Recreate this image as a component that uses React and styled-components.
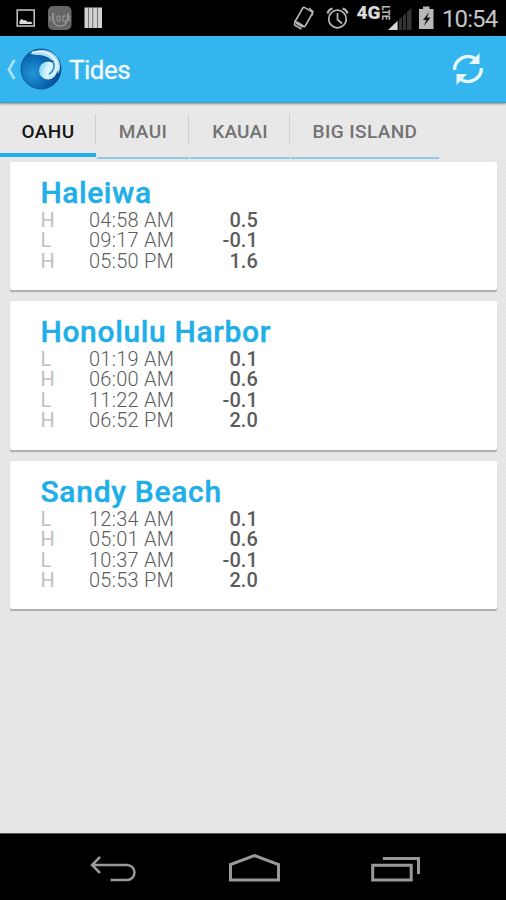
import React from 'react';
import styled, { createGlobalStyle } from 'styled-components';

const GlobalStyle = createGlobalStyle`
  body {
    margin: 0;
    background: #000;
    font-family: Roboto, 'Liberation Sans', sans-serif;
  }

  svg {
    display: block;
    flex: none;
  }
`;

const Screen = styled.div`
  width: 506px;
  height: 900px;
  display: flex;
  flex-direction: column;
  overflow: hidden;
  background-color: #e7e7e7;
  background-image: linear-gradient(45deg, #e3e3e3 25%, #e9e9e9 25% 50%, #e3e3e3 50% 75%, #e9e9e9 75%);
  background-size: 4px 4px;
`;

const StatusBar = styled.header`
  flex: none;
  height: 36px;
  display: flex;
  justify-content: space-between;
  background: #000;
`;

const StatusGroup = styled.div`
  display: flex;
`;

const Clock = styled.span`
  width: 64px;
  color: #c4c4c4;
  font-size: 24px;
  line-height: 38px;
  letter-spacing: -0.9px;
  white-space: nowrap;
`;

const ActionBar = styled.div`
  flex: none;
  height: 67px;
  display: flex;
  align-items: center;
  background: #35b5ee;
  border-bottom: 1px solid #4a9cc6;
  box-sizing: border-box;
  box-shadow: 0 1px 2px rgba(0, 0, 0, 0.4);
  z-index: 1;
`;

const ScreenTitle = styled.h1`
  flex: 1;
  margin: 2px 0 0 7px;
  color: #f3fbff;
  font-size: 26px;
  font-weight: 400;
  letter-spacing: -0.5px;
  -webkit-text-stroke: 0.3px #f3fbff;
`;

const RefreshButton = styled.button`
  margin: 0 20px 0 0;
  padding: 0;
  border: none;
  background: none;
`;

const Tabs = styled.nav`
  flex: none;
  height: 56px;
  display: flex;
`;

const Tab = styled.div`
  box-sizing: border-box;
  width: ${(props) => props.$width}px;
  height: ${(props) => (props.$active ? 54 : 56)}px;
  margin-right: 1px;
  text-align: center;
  color: ${(props) => (props.$active ? '#151515' : '#737373')};
  font-size: 19px;
  font-weight: 500;
  line-height: 58px;
  letter-spacing: ${(props) => props.$spacing}px;
  white-space: nowrap;
  background-color: #e8e8e8;
  border-bottom: ${(props) => (props.$active ? '4px solid #22aee8' : '2px solid #8fc9e8')};
  background-image: linear-gradient(#cfcfcf, #cfcfcf);
  background-size: ${(props) => (props.$last ? '0 0' : '1px 31px')};
  background-position: right 11px;
  background-repeat: no-repeat;
`;

const TabFill = styled.div`
  flex: 1;
  height: 54px;
  margin-left: -1px;
  background: #e8e8e8;
`;

const Stations = styled.main`
  flex: 1;
  display: flex;
  flex-direction: column;
  gap: 11px;
  padding: 3px 9px 0 10px;
`;

const Card = styled.section`
  box-sizing: border-box;
  height: ${(props) => props.$height}px;
  padding: 13px 30.5px 0;
  background: #fff;
  border-radius: 2px;
  box-shadow: 0 2px 1px rgba(0, 0, 0, 0.25);
`;

const StationName = styled.h2`
  margin: 0;
  height: 35px;
  color: #1eaee8;
  font-size: 30px;
  font-weight: 500;
  line-height: 36px;
  letter-spacing: ${(props) => props.$spacing}px;
  -webkit-text-stroke: 0.4px #1eaee8;
`;

const TideRow = styled.div`
  display: grid;
  grid-template-columns: 48.5px 86px 83px;
  height: 20.4px;
  font-size: 20px;
  line-height: 21.4px;
  white-space: nowrap;
`;

const TideType = styled.span`
  color: #c0c0c0;
  font-weight: 400;
`;

const TideTime = styled.span`
  color: #5c5c5c;
  font-weight: 300;
  letter-spacing: 0.25px;
`;

const TideHeight = styled.span`
  color: #5c5c5c;
  font-weight: 500;
  text-align: right;
  letter-spacing: 0.1px;
`;

const NavBar = styled.footer`
  flex: none;
  box-sizing: border-box;
  height: 67px;
  border-top: 1px solid #555;
  padding: 20px 85px 0 88px;
  display: flex;
  justify-content: space-between;
  background: #000;
`;

const tabs = [
  { label: 'OAHU', width: 96, spacing: 0.4, active: true },
  { label: 'MAUI', width: 92, spacing: 0.4 },
  { label: 'KAUAI', width: 100, spacing: 0.2 },
  { label: 'BIG ISLAND', width: 148, spacing: 0.4 },
];

const stations = [
  {
    name: 'Haleiwa',
    spacing: 0.55,
    height: 128,
    tides: [
      ['H', '04:58 AM', '0.5'],
      ['L', '09:17 AM', '-0.1'],
      ['H', '05:50 PM', '1.6'],
    ],
  },
  {
    name: 'Honolulu Harbor',
    spacing: 0.65,
    height: 149,
    tides: [
      ['L', '01:19 AM', '0.1'],
      ['H', '06:00 AM', '0.6'],
      ['L', '11:22 AM', '-0.1'],
      ['H', '06:52 PM', '2.0'],
    ],
  },
  {
    name: 'Sandy Beach',
    spacing: 0.7,
    height: 148,
    tides: [
      ['L', '12:34 AM', '0.1'],
      ['H', '05:01 AM', '0.6'],
      ['L', '10:37 AM', '-0.1'],
      ['H', '05:53 PM', '2.0'],
    ],
  },
];

function NotificationIcons() {
  return (
    <svg width="110" height="36" viewBox="0 0 110 36">
      <rect x="17.2" y="10" width="17" height="16" fill="none" stroke="#c8c8c8" strokeWidth="1.5" />
      <path d="M19.5 24v-3l2-2 2.5 1.5L25 20l3 2 3-.5 1.5 2.5z" fill="#dcdcdc" />
      <rect x="48" y="6" width="23.5" height="24" rx="5" fill="#666" />
      <path d="M53 13q-1 13 7 13t8-12" fill="none" stroke="#929292" strokeWidth="1.5" />
      <path d="M50 16v5M53 13v8h2M57 16h3v5h-3zM66 16h-3v5h3M68 13v8M71 16l-3 2 3 3" fill="none" stroke="#999" strokeWidth="1" />
      <rect x="84.5" y="7.5" width="17.5" height="20.5" fill="#d2d2d2" />
      <path d="M88.5 8v20M92.7 8v20M97.5 8v20" stroke="#777" strokeWidth="1.1" />
    </svg>
  );
}

function SystemIcons() {
  return (
    <svg width="152" height="36" viewBox="290 0 152 36">
      <g fill="none" stroke="#b8b8b8" strokeWidth="1.7">
        <rect x="-5.5" y="-8.5" width="11" height="17" rx="1.5" transform="translate(304 17) rotate(30)" />
        <path d="M309 8l4 3.5-1 4" strokeWidth="1.4" />
        <path d="M295 20.5l-.5 4.5 7 4" strokeWidth="1.5" />
        <path d="M296.500 22.500l6.500 4" strokeWidth="3" />
        <circle cx="337.5" cy="19" r="8.8" />
        <path d="M337.500 13v6.500l4.500 4" />
        <path d="M327.500 13.500q1-4 5-5M347.500 13.500q-1-4-5-5" strokeWidth="2.3" />
      </g>
      <text x="356.5" y="19" fill="#dadada" fontSize="18.5" fontWeight="900" textLength="24" lengthAdjust="spacingAndGlyphs">4G</text>
      <text transform="translate(381.5 5.5) rotate(90)" x="0" y="0" fill="#b5b5b5" fontSize="10.5" fontWeight="900" textLength="14.5" lengthAdjust="spacingAndGlyphs">LTE</text>
      <path d="M388 30L411.500 8v22z" fill="#343434" />
      <path d="M388 30l9.500-9v9z" fill="#d5d5d5" />
      <path d="M398.500 19v11M402.500 16v14M406.500 12v18" stroke="#000" strokeWidth="1" />
      <path d="M419 9h4V6.500h6.500V9h4v20H419z" fill="#b8b8b8" />
      <path d="M429 12l-6 8h3.200l-2.200 6 6.500-8.500h-3.500z" fill="#111" />
    </svg>
  );
}

function BackChevron() {
  return (
    <svg width="20" height="26" viewBox="0 0 20 26">
      <path d="M14.500 4L8.800 13.500l5.700 9.500" fill="none" stroke="#a9def7" strokeWidth="2.8" />
    </svg>
  );
}

// blue ball with a pale crest curling down around the bright centre
function WaveLogo() {
  return (
    <svg width="42" height="42" viewBox="0 0 42 42">
      <defs>
        <radialGradient id="sea" cx="0.3" cy="0.6" r="0.7">
          <stop offset="0" stopColor="#2795d6" />
          <stop offset="0.5" stopColor="#0d6fb8" />
          <stop offset="1" stopColor="#0a4488" />
        </radialGradient>
        <linearGradient id="curl" x1="0" y1="0" x2="1" y2="0.3">
          <stop offset="0" stopColor="#6cccf3" />
          <stop offset="0.6" stopColor="#e0f7ff" />
          <stop offset="1" stopColor="#b5e4f8" />
        </linearGradient>
      </defs>
      <circle cx="21" cy="21" r="20" fill="url(#sea)" stroke="#0f5a9c" strokeWidth="1" />
      <path d="M10 5.500C18 0 30 1 36 8c5 6 5 13 2 18 0-8-4-13-10-16.500C22 6 16 8 10 5.500z" fill="#a9dcf5" />
      <path d="M12 4.500C20 2 31 4 37 14" fill="none" stroke="#e4f7ff" strokeWidth="1.5" />
      <circle cx="28" cy="22.500" r="9" fill="url(#curl)" />
      <path d="M31 10c5 5 5 12 0 16l-3 2c6 1 11-4 10.500-10C38 13 35 10 31 10z" fill="#d8f2fc" />
      <path d="M32.500 12c3 6 1.500 11-3.500 14.500" fill="none" stroke="#2687c6" strokeWidth="1.5" />
    </svg>
  );
}

function RefreshIcon() {
  return (
    <svg width="36" height="36" viewBox="0 0 36 36">
      <g id="half">
        <path d="M4.500 19A13.500 13.500 0 0 1 25 7.500" fill="none" stroke="#e6f7ff" strokeWidth="3.4" />
        <path d="M29.500 2v11H19z" fill="#e6f7ff" />
      </g>
      <use href="#half" transform="rotate(180 18 18)" />
    </svg>
  );
}

function NavIcons() {
  return (
    <>
      <svg width="50" height="32" viewBox="0 0 50 32">
        <path d="M12 3L4 11l8 8M4 11h35a7.500 7.500 0 0 1 0 15H22.500" fill="none" stroke="#999" strokeWidth="2.5" />
      </svg>
      <svg width="54" height="32" viewBox="0 0 54 32">
        <path d="M2.500 26V10.500L26.500 1.500l24 9V26z" fill="none" stroke="#999" strokeWidth="3" />
      </svg>
      <svg width="50" height="32" viewBox="0 0 50 32">
        <path d="M1.700 11.300h38.500V26H1.700zM12 4.500h35.500v15.500" fill="none" stroke="#999" strokeWidth="3" />
      </svg>
    </>
  );
}

function StationCard({ station }) {
  return (
    <Card $height={station.height}>
      <StationName $spacing={station.spacing}>{station.name}</StationName>
      {station.tides.map(([type, time, height]) => (
        <TideRow key={time}>
          <TideType>{type}</TideType>
          <TideTime>{time}</TideTime>
          <TideHeight>{height}</TideHeight>
        </TideRow>
      ))}
    </Card>
  );
}

function App() {
  return (
    <>
      <GlobalStyle />
      <Screen>
        <StatusBar>
          <NotificationIcons />
          <StatusGroup>
            <SystemIcons />
            <Clock>10:54</Clock>
          </StatusGroup>
        </StatusBar>
        <ActionBar>
          <BackChevron />
          <WaveLogo />
          <ScreenTitle>Tides</ScreenTitle>
          <RefreshButton aria-label="Refresh">
            <RefreshIcon />
          </RefreshButton>
        </ActionBar>
        <Tabs>
          {tabs.map((tab, i) => (
            <Tab
              key={tab.label}
              $width={tab.width}
              $spacing={tab.spacing}
              $active={tab.active}
              $last={i === tabs.length - 1}
            >
              {tab.label}
            </Tab>
          ))}
          <TabFill />
        </Tabs>
        <Stations>
          {stations.map((station) => (
            <StationCard key={station.name} station={station} />
          ))}
        </Stations>
        <NavBar>
          <NavIcons />
        </NavBar>
      </Screen>
    </>
  );
}

export default App;
